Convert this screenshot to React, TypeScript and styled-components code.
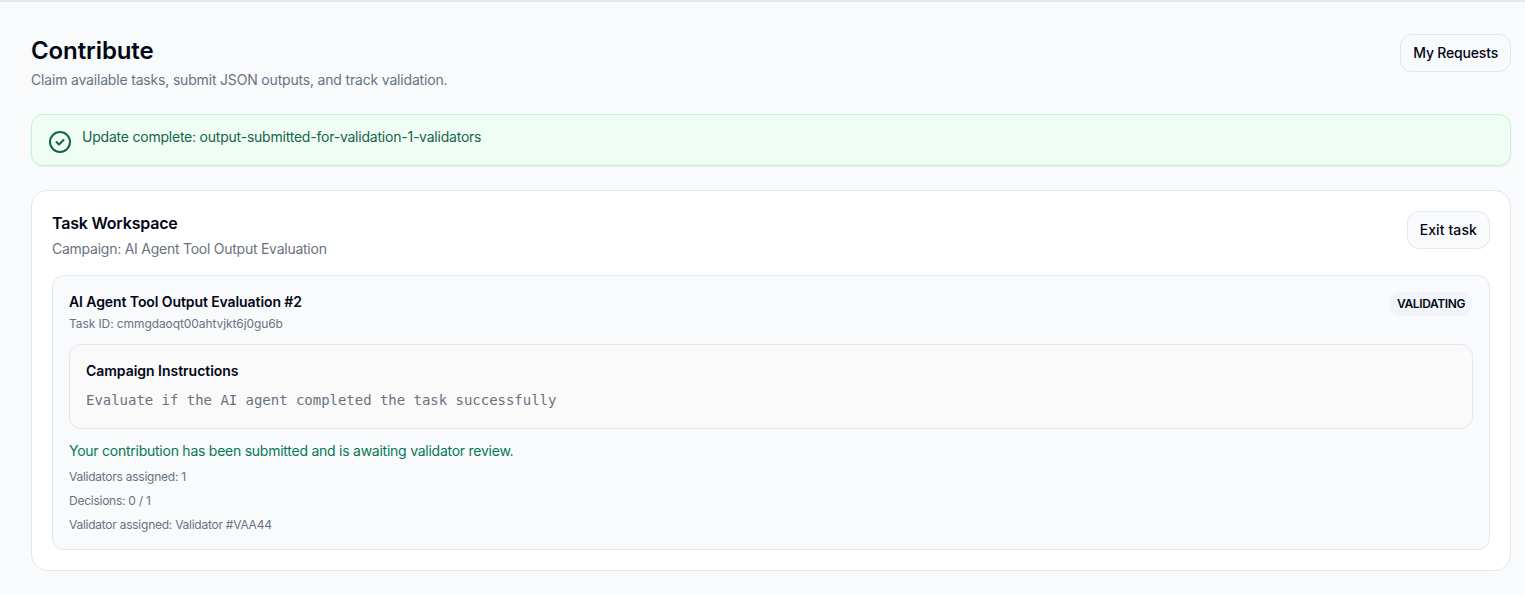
import { styled, createGlobalStyle } from "styled-components";

const GlobalStyle = createGlobalStyle`
  html, body {
    margin: 0;
    padding: 0;
    background: #f8fafc;
  }
  body {
    font-family: "Inter", "Liberation Sans", sans-serif;
    color: #020617;
  }
`;

const Page = styled.main`
  box-sizing: border-box;
  width: 1525px;
  height: 595px;
  overflow: hidden;
  border-top: 2px solid #e5e7eb;
  padding: 32px 14px 0 31px;
`;

const Header = styled.header`
  display: flex;
  justify-content: space-between;
  align-items: flex-start;
  height: 80px;
`;

const Title = styled.h1`
  margin: 0;
  padding-top: 1px;
  font-size: 24px;
  line-height: 32px;
  font-weight: 600;
  letter-spacing: -0.1px;
  color: #020617;
`;

const Subtitle = styled.p`
  margin: 3px 0 0;
  font-size: 14px;
  line-height: 20px;
  letter-spacing: -0.18px;
  color: #6b7280;
`;

const Button = styled.button<{ $spacing: string }>`
  box-sizing: border-box;
  height: 38px;
  padding: 0 12px 1px;
  border: 1px solid #e2e8f0;
  border-radius: 12px;
  background: #f8fafc;
  font-family: inherit;
  font-size: 14px;
  font-weight: 500;
  letter-spacing: ${(p) => p.$spacing};
  color: #020617;
`;

const Alert = styled.div`
  box-sizing: border-box;
  display: flex;
  gap: 11px;
  height: 52px;
  padding: 12px 17px;
  border: 1px solid #bbf7d0;
  border-radius: 12px;
  background: #f0fdf4;
  box-shadow: 0 1px 2px rgba(0, 0, 0, 0.05);
  font-size: 14px;
  line-height: 20px;
  letter-spacing: -0.22px;
  color: #14654a;

  svg {
    flex: none;
    margin-top: 4px;
  }
`;

const Card = styled.section`
  box-sizing: border-box;
  height: 381px;
  margin-top: 24px;
  padding: 20px;
  border: 1px solid #e2e8f0;
  border-radius: 16px;
  background: #ffffff;
`;

const CardHead = styled.div`
  display: flex;
  justify-content: space-between;
  align-items: flex-start;
  height: 64px;
`;

const CardTitle = styled.h2`
  margin: 0;
  padding-top: 1px;
  font-size: 16px;
  line-height: 22px;
  font-weight: 600;
  letter-spacing: -0.2px;
`;

const CardSub = styled.p`
  margin: 5px 0 0;
  font-size: 14px;
  line-height: 20px;
  letter-spacing: -0.25px;
  color: #6b7280;
`;

const TaskPanel = styled.div`
  box-sizing: border-box;
  height: 275px;
  padding: 16px;
  border: 1px solid #e2e8f0;
  border-radius: 12px;
  background: #f8fafc;
`;

const TaskHead = styled.div`
  display: flex;
  justify-content: space-between;
  align-items: flex-start;
`;

const TaskTitle = styled.h3`
  margin: 0;
  font-size: 14px;
  line-height: 20px;
  font-weight: 600;
  letter-spacing: -0.09px;
`;

const TaskId = styled.p`
  margin: 4px 0 0;
  font-size: 12px;
  line-height: 16px;
  letter-spacing: -0.09px;
  color: #6b7280;
`;

const Badge = styled.span`
  padding: 2px 8px;
  border-radius: 999px;
  background: #f1f5f9;
  font-size: 12px;
  line-height: 20px;
  font-weight: 600;
  letter-spacing: -0.4px;
  color: #020617;
`;

const Instructions = styled.div`
  box-sizing: border-box;
  height: 85px;
  margin-top: 12px;
  padding: 16px;
  border: 1px solid #e2e8f0;
  border-radius: 12px;
  background: #fafafa;
`;

const InstructionsTitle = styled.h4`
  margin: 0;
  font-size: 14px;
  line-height: 20px;
  font-weight: 600;
  letter-spacing: -0.03px;
`;

const InstructionsBody = styled.pre`
  margin: 9px 0 0;
  font-family: "DejaVu Sans Mono", "Liberation Mono", monospace;
  font-size: 14px;
  line-height: 20px;
  letter-spacing: -0.03px;
  color: #6b7280;
`;

const Success = styled.p`
  margin: 12px 0 0;
  font-size: 14px;
  line-height: 20px;
  letter-spacing: -0.25px;
  color: #047857;
`;

const MetaList = styled.div`
  display: flex;
  flex-direction: column;
  gap: 8px;
  margin-top: 8px;
`;

const Meta = styled.p`
  margin: 0;
  font-size: 12px;
  line-height: 16px;
  letter-spacing: -0.25px;
  color: #6b7280;
`;

const meta = ["Validators assigned: 1", "Decisions: 0 / 1", "Validator assigned: Validator #VAA44"];

export default function App() {
  return (
    <>
      <GlobalStyle />
      <Page>
        <Header>
          <div>
            <Title>Contribute</Title>
            <Subtitle>Claim available tasks, submit JSON outputs, and track validation.</Subtitle>
          </div>
          <Button $spacing="-0.18px">My Requests</Button>
        </Header>

        <Alert>
          <svg width="22" height="22" viewBox="0 0 22 22" fill="none" stroke="#14654a" strokeLinecap="round" strokeLinejoin="round">
            <circle cx="11" cy="11" r="10" strokeWidth="2" />
            <path d="M7.5 11l2.5 2.5 4.5-4.5" strokeWidth="2" />
          </svg>
          <span>Update complete: output-submitted-for-validation-1-validators</span>
        </Alert>

        <Card>
          <CardHead>
            <div>
              <CardTitle>Task Workspace</CardTitle>
              <CardSub>Campaign: AI Agent Tool Output Evaluation</CardSub>
            </div>
            <Button $spacing="0.1px">Exit task</Button>
          </CardHead>

          <TaskPanel>
            <TaskHead>
              <div>
                <TaskTitle>AI Agent Tool Output Evaluation #2</TaskTitle>
                <TaskId>Task ID: cmmgdaoqt00ahtvjkt6j0gu6b</TaskId>
              </div>
              <Badge>VALIDATING</Badge>
            </TaskHead>

            <Instructions>
              <InstructionsTitle>Campaign Instructions</InstructionsTitle>
              <InstructionsBody>Evaluate if the AI agent completed the task successfully</InstructionsBody>
            </Instructions>

            <Success>Your contribution has been submitted and is awaiting validator review.</Success>
            <MetaList>
              {meta.map((line) => (
                <Meta key={line}>{line}</Meta>
              ))}
            </MetaList>
          </TaskPanel>
        </Card>
      </Page>
    </>
  );
}
